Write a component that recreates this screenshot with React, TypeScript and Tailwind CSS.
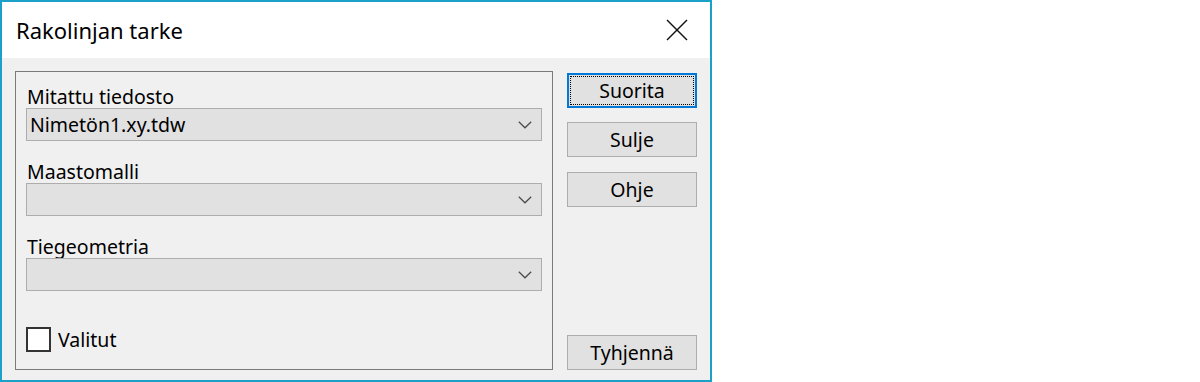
const Chevron = () => (
  <svg width="14" height="8" viewBox="0 0 14 8" fill="none" stroke="#4a4a4a" strokeWidth="1.2">
    <polyline points="0.8,0.8 7,6.8 13.2,0.8" />
  </svg>
);

function Combo({ label, value }: { label: string; value?: string }) {
  return (
    <div className="flex flex-col">
      <div className="h-[22px] leading-[22px] pl-[1px] text-black">{label}</div>
      <div className="h-[33px] flex items-center justify-between border border-[#adadad] bg-[#e1e1e1] pl-[3px] pr-[9px]">
        <span className="text-black leading-[22px]">{value}</span>
        <Chevron />
      </div>
    </div>
  );
}

function Button({ children, focused }: { children: React.ReactNode; focused?: boolean }) {
  if (focused) {
    return (
      <div className="h-[35px] w-[130px] border-2 border-[#0078d7] bg-[#e1e1e1] p-[1px]">
        <div className="h-full w-full border border-dotted border-black flex items-center justify-center text-black">
          {children}
        </div>
      </div>
    );
  }
  return (
    <div className="h-[35px] w-[130px] border border-[#adadad] bg-[#e1e1e1] flex items-center justify-center text-black">
      {children}
    </div>
  );
}

export default function App() {
  return (
    <div className="w-[1200px] h-[382px] bg-white">
      <div
        className="w-[712px] h-[382px] border-2 border-[#1ba0c7] flex flex-col bg-[#f0f0f0] text-[19.5px]"
        style={{ fontFamily: '"Noto Sans", sans-serif' }}
      >
        {/* Title bar */}
        <div className="h-[56px] bg-white flex items-center justify-between pl-[14px] pr-[22px] shrink-0">
          <span className="text-[22px] text-black leading-none pb-[1px]">Rakolinjan tarke</span>
          <svg width="22" height="22" viewBox="0 0 22 22" stroke="#111" strokeWidth="1.5">
            <line x1="1" y1="1" x2="21" y2="21" />
            <line x1="21" y1="1" x2="1" y2="21" />
          </svg>
        </div>

        {/* Body */}
        <div className="flex pt-[13px] pl-[13px] pr-[13px]">
          <div className="w-[538px] h-[299px] border border-[#7a7a7a] flex flex-col pt-[14px] pl-[10px] pr-[10px]">
            <Combo label="Mitattu tiedosto" value="Nimetön1.xy.tdw" />
            <div className="mt-[20px]">
              <Combo label="Maastomalli" />
            </div>
            <div className="mt-[20px]">
              <Combo label="Tiegeometria" />
            </div>
            <div className="mt-[36px] flex items-center gap-[7px]">
              <div className="w-[25px] h-[25px] border-2 border-[#333] bg-white" />
              <span className="text-black leading-[22px]">Valitut</span>
            </div>
          </div>

          <div className="ml-[14px] flex flex-col pt-[2px] h-[299px]">
            <Button focused>Suorita</Button>
            <div className="mt-[14px]">
              <Button>Sulje</Button>
            </div>
            <div className="mt-[15px]">
              <Button>Ohje</Button>
            </div>
            <div className="mt-auto">
              <Button>Tyhjennä</Button>
            </div>
          </div>
        </div>
      </div>
    </div>
  );
}
